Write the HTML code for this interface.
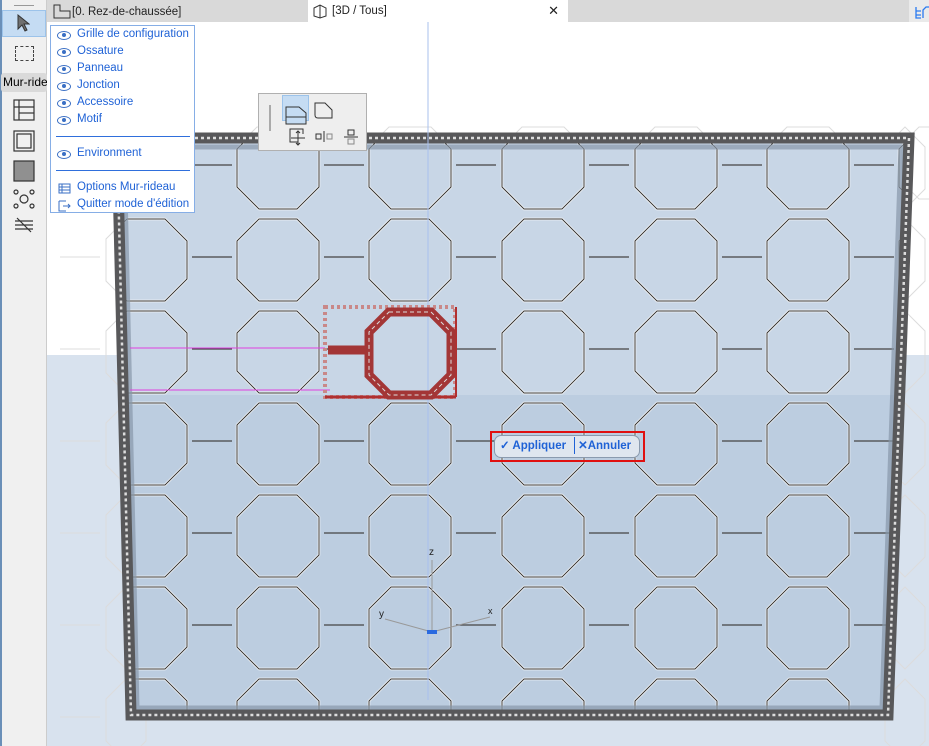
<!DOCTYPE html>
<html><head><meta charset="utf-8"><style>
*{margin:0;padding:0;box-sizing:border-box}
body{width:929px;height:746px;overflow:hidden;background:#fff;font-family:"Liberation Sans",sans-serif;position:relative}
.abs{position:absolute}
#left{left:0;top:0;width:47px;height:746px;background:#f0f0f0;border-left:2px solid #6a8fb8;border-right:1px solid #ccc}
#tabs{left:47px;top:0;width:882px;height:22px;background:#d9d9d9}
.menu{left:50px;top:25px;width:145px;height:188px;background:#fff;border:1px solid #86aee6}
.mi{position:absolute;left:26px;font-size:11.5px;color:#1f62d6;white-space:nowrap}
.eye{position:absolute;left:6px;width:14px;height:9px;border:1.3px solid #3a6fc4;border-radius:50%}
.eye:after{content:"";position:absolute;left:3.5px;top:1.2px;width:4px;height:4px;border-radius:50%;background:#3a6fc4}
.sep{position:absolute;left:5px;width:134px;height:1px;background:#2f6fdc}
</style></head><body>
<svg class="abs" style="left:0;top:0" width="929" height="746" id="sv">
<rect x="47" y="355" width="882" height="391" fill="#d8e2ee"/>
<rect x="47" y="22" width="882" height="333" fill="#fff"/>
<g id="ghost" fill="none" stroke="#dcdcdc" stroke-width="1"></g>
<polygon points="112,133 914,133 893,720 127,720" fill="#c8d6e6"/>
<clipPath id="wc"><polygon points="112,133 914,133 893,720 127,720"/></clipPath>
<rect x="100" y="395" width="830" height="330" fill="#bccde0" clip-path="url(#wc)"/>
<g id="oct" clip-path="url(#wc)" fill="none"></g>
<polygon points="124,147 901,147 882,708 137,708" fill="none" stroke="#8797aa" stroke-width="5" opacity=".7"/>
<polygon points="117,138 909,138 888,715 131,715" fill="none" stroke="#58585a" stroke-width="11"/>
<polygon points="117,138 909,138 888,715 131,715" fill="none" stroke="#ddd" stroke-width="2.5" stroke-dasharray="3 3"/>
<line x1="428" y1="22" x2="428" y2="700" stroke="#a8c0ee" stroke-width="1"/>
<line x1="130" y1="348" x2="325" y2="348" stroke="#e040e0" stroke-width="1"/>
<line x1="130" y1="390" x2="330" y2="390" stroke="#e040e0" stroke-width="1"/>
<rect x="325" y="307" width="130" height="90" fill="none" stroke="#c98888" stroke-width="4" stroke-dasharray="3 3"/>
<line x1="325" y1="397" x2="456" y2="397" stroke="#b03030" stroke-width="3"/>
<line x1="456" y1="307" x2="456" y2="397" stroke="#b03030" stroke-width="2"/>
<line x1="328" y1="350" x2="367" y2="350" stroke="#a33636" stroke-width="9"/>
<polygon points="389,312 431,312 451,332 451,375 431,395 389,395 369,375 369,332" fill="none" stroke="#a33636" stroke-width="9"/>
<polygon points="389,312 431,312 451,332 451,375 431,395 389,395 369,375 369,332" fill="none" stroke="#ddd" stroke-width="1" stroke-dasharray="4 3"/>
<text x="429" y="555" font-size="10" fill="#222">z</text>
<line x1="432" y1="560" x2="432" y2="632" stroke="#999"/>
<line x1="432" y1="632" x2="385" y2="619" stroke="#999"/>
<line x1="432" y1="632" x2="490" y2="617" stroke="#999"/>
<text x="379" y="617" font-size="10" fill="#222">y</text>
<text x="488" y="614" font-size="9" fill="#222">x</text>
<rect x="427" y="630" width="10" height="4" fill="#2a6ae0"/>
</svg>
<script>
var g=document.getElementById('oct'),gh=document.getElementById('ghost'),s='',t='';
function oc(cx,cy,w,h,c){var a=w/2,b=h/2;return [cx-a+c,cy-b,cx+a-c,cy-b,cx+a,cy-b+c,cx+a,cy+b-c,cx+a-c,cy+b,cx-a+c,cy+b,cx-a,cy+b-c,cx-a,cy-b+c].join(',');}
var cols=[146,278,410,543,676,808,940],rows=[168,260,352,444,536,628,720];
rows.forEach(function(y){cols.forEach(function(x,i){
 if(!(x==410&&y==352)){s+='<polygon points="'+oc(x,y,82,82,22)+'" stroke="#fff" stroke-width="2.4"/><polygon points="'+oc(x,y,82,82,22)+'" stroke="#333" stroke-width="1"/>';}
 if(i<cols.length-1)s+='<line x1="'+(x+46)+'" y1="'+(y-3)+'" x2="'+(x+86)+'" y2="'+(y-3)+'" stroke="#444" stroke-width="1.2"/>';
});});
g.innerHTML=s;
cols.forEach(function(x){t+='<polygon points="'+oc(x,163,82,72,20)+'"/>';});
rows.forEach(function(y){t+='<polygon points="'+oc(126,y,40,82,20)+'"/><polygon points="'+oc(905,y,40,82,20)+'"/><line x1="60" y1="'+(y-3)+'" x2="100" y2="'+(y-3)+'"/>';});
gh.innerHTML=t;
</script>
<div class="abs" id="left"></div>
<div class="abs" style="left:14px;top:5px;width:20px;height:1px;background:#999"></div>
<div class="abs" style="left:2px;top:10px;width:44px;height:27px;background:#c5dcf3;border:1px solid #9cc3ea"></div>
<svg class="abs" style="left:16px;top:13px" width="14" height="20"><path d="M2 2 L2 16 L6 12 L9 18 L11 17 L8 11 L13 11 Z" fill="#707070" stroke="#333" stroke-width="1"/></svg>
<div class="abs" style="left:15px;top:46px;width:19px;height:15px;border:1px dashed #444"></div>
<div class="abs" style="left:1px;top:73px;width:46px;height:19px;background:#dadada;border-radius:3px;font-size:12px;line-height:19px;padding-left:2px;overflow:hidden;white-space:nowrap">Mur-ride</div>
<svg class="abs" style="left:13px;top:99px" width="24" height="140" fill="none" stroke="#333" stroke-width="1.2">
<rect x="1" y="1" width="20" height="20"/><line x1="6" y1="1" x2="6" y2="21"/><line x1="1" y1="8" x2="21" y2="8"/><line x1="6" y1="14" x2="21" y2="14"/>
<rect x="1" y="32" width="20" height="20"/><rect x="4" y="35" width="14" height="14"/>
<rect x="1" y="62" width="20" height="20" fill="#909090"/>
<circle cx="11" cy="100" r="4"/><circle cx="3" cy="93" r="2"/><circle cx="19" cy="93" r="2"/><circle cx="3" cy="107" r="2"/><circle cx="19" cy="107" r="2"/>
<path d="M2 122 L20 122 M2 126 L20 126 M2 130 L20 130 M4 119 L18 133"/>
</svg>
<div class="abs" id="tabs"></div>
<div class="abs" style="left:50px;top:2px;width:140px;height:20px;font-size:11.5px;line-height:20px;color:#222;padding-left:22px">[0. Rez-de-chaussée]</div>
<svg class="abs" style="left:53px;top:4px" width="18" height="15" fill="none" stroke="#333"><path d="M1 1 V14 H17 V7 H7 V1 Z"/></svg>
<div class="abs" style="left:308px;top:0;width:260px;height:22px;background:#fff;font-size:11.5px;line-height:22px;color:#222;padding-left:24px">[3D / Tous]<span style="position:absolute;right:9px;font-size:13px">✕</span></div>
<svg class="abs" style="left:313px;top:4px" width="14" height="15" fill="none" stroke="#333"><path d="M1 4 L7 1 L13 4 V12 L7 14 L1 12 Z M7 1 V14"/></svg>
<div class="abs" style="left:909px;top:0;width:20px;height:22px;background:#eaeaea"></div>
<svg class="abs" style="left:914px;top:6px" width="15" height="14" fill="none" stroke="#2a7af0" stroke-width="1.3"><path d="M2 1 V12 H7 M2 5 H7 M2 9 H7 M9 12 V4 L12 1 H15"/></svg>
<div class="abs menu">
<div class="eye" style="top:5px"></div><div class="mi" style="top:2px">Grille de configuration</div>
<div class="eye" style="top:22px"></div><div class="mi" style="top:19px">Ossature</div>
<div class="eye" style="top:39px"></div><div class="mi" style="top:36px">Panneau</div>
<div class="eye" style="top:56px"></div><div class="mi" style="top:53px">Jonction</div>
<div class="eye" style="top:73px"></div><div class="mi" style="top:70px">Accessoire</div>
<div class="eye" style="top:90px"></div><div class="mi" style="top:87px">Motif</div>
<div class="sep" style="top:110px"></div>
<div class="eye" style="top:124px"></div><div class="mi" style="top:121px">Environment</div>
<div class="sep" style="top:144px"></div>
<svg style="position:absolute;left:7px;top:157px" width="14" height="30" fill="none" stroke="#3a6fc4"><rect x="1" y="1" width="11" height="9"/><path d="M4 1V10M1 4H12M1 7H12"/><path d="M1 18V28H8M1 18H8M5 23H12M10 21L12 23L10 25"/></svg>
<div class="mi" style="top:155px">Options Mur-rideau</div>
<div class="mi" style="top:172px">Quitter mode d'édition</div>
</div>
<div class="abs" style="left:258px;top:93px;width:109px;height:58px;background:#eeeeee;border:1px solid #b0b0b0"></div>
<div class="abs" style="left:282px;top:95px;width:27px;height:26px;background:#c5dcf3;border:1px solid #9cc3ea"></div>
<svg class="abs" style="left:258px;top:93px" width="110" height="58" fill="none" stroke="#333" stroke-width="1">
<line x1="12" y1="12" x2="12" y2="38" stroke="#666"/>
<path d="M28 24 V14 H41 L48 20 V24 Z M28 24 V31 H48 V24" fill="#c5dcf3"/>
<path d="M57 10 H67 L74 17 V25 H60 Q57 25 57 22 Z"/>
<path d="M40 49 H32 V36 H45 V41"/><path d="M40 38 V52 M33 45 H47 M38 40 L40 38 L42 40 M38 50 L40 52 L42 50"/>
<rect x="58" y="41" width="5" height="5"/><line x1="66" y1="38" x2="66" y2="49"/><rect x="69" y="41" width="5" height="5" stroke="#888"/>
<rect x="90" y="37" width="6" height="5"/><line x1="86" y1="44" x2="100" y2="44"/><rect x="90" y="46" width="6" height="5" stroke="#888"/>
</svg>
<div class="abs" style="left:490px;top:431px;width:155px;height:31px;border:2px solid #e01010"></div>
<div class="abs" style="left:494px;top:435px;width:146px;height:23px;border:1px solid #8a9aae;border-radius:7px;background:#dfe6ef;font-size:11.5px;font-weight:bold;color:#1f62d6;line-height:21px;padding-left:5px;white-space:nowrap">✓ Appliquer<span style="display:inline-block;width:1px;height:17px;background:#1f62d6;vertical-align:middle;margin:0 3px 0 8px"></span>✕Annuler</div>
</body></html>
